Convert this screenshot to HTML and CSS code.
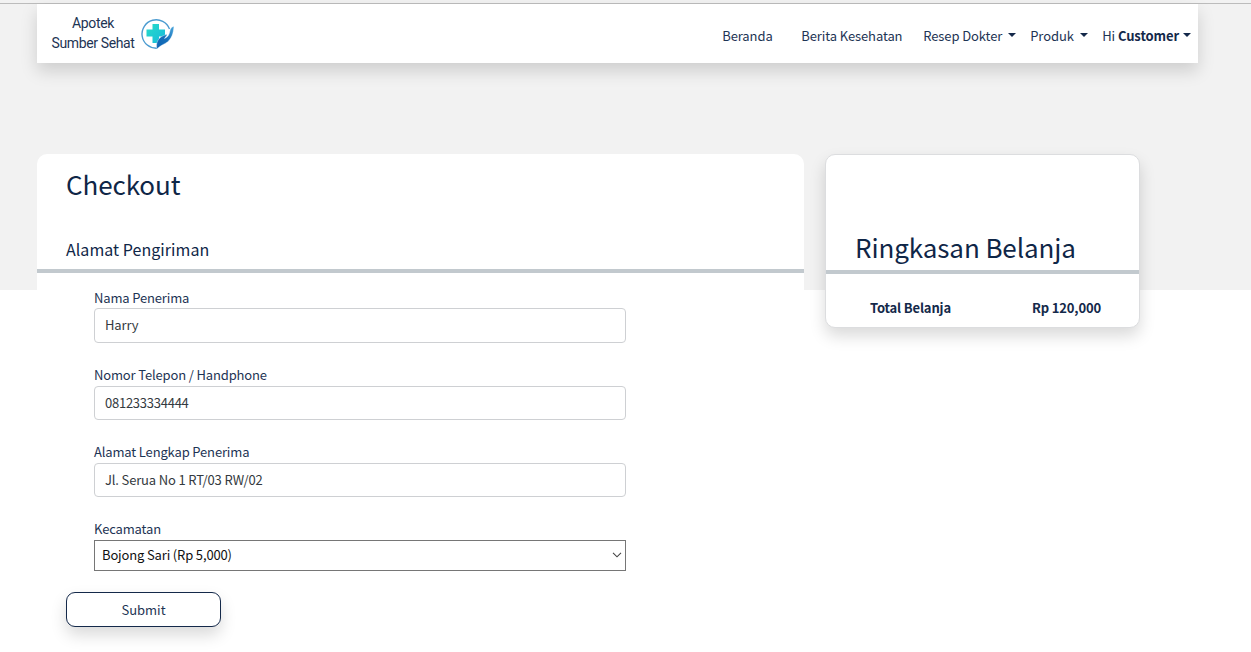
FILE: index.html
```html
<!DOCTYPE html>
<html lang="id">
<head>
<meta charset="utf-8">
<title>Checkout - Apotek Sumber Sehat</title>
<link rel="stylesheet" href="styles.css">
</head>
<body>
<header class="navbar">
  <a class="brand">
    <span class="brand-name">Apotek<br>Sumber Sehat</span>
    <svg class="brand-logo" width="36" height="34" viewBox="0 0 36 34">
      <defs>
        <linearGradient id="hand" x1="0" y1="1" x2="1" y2="0"><stop offset="0" stop-color="#0b62b4"/><stop offset=".5" stop-color="#1670ba"/><stop offset="1" stop-color="#4aa6dc"/></linearGradient>
        <linearGradient id="cross" x1="0" y1="0" x2="1" y2="1"><stop offset="0" stop-color="#27dcc8"/><stop offset="1" stop-color="#17b9dc"/></linearGradient>
      </defs>
      <path d="M29.500 12A14.2 14.2 0 1 0 17 31.200" fill="none" stroke="#4b9bd0" stroke-width="1.4"/>
      <path d="M12.500 7h6.500v5.500h6v7h-6v6.500h-6.500v-6.500h-6v-7h6z" fill="url(#cross)"/>
      <path d="M17 32C15.500 26 18 21 23.500 18.600C25.500 17.800 28 16.800 26.800 18.500L24.500 21.500C28 20 29 18 29.800 14.500C30.300 11.500 31.500 10 34 9.300C33.500 14 33 19 29 23.500C26 27 22 27 17 32Z" fill="url(#hand)" stroke="#fff" stroke-width=".4"/>
    </svg>
  </a>
  <nav class="menu">
    <a class="link link-home">Beranda</a>
    <a class="link link-news">Berita Kesehatan</a>
    <a class="link link-recipe">Resep Dokter<i class="caret"></i></a>
    <a class="link link-product">Produk<i class="caret"></i></a>
    <a class="link link-user">Hi&nbsp;<b>Customer</b><i class="caret"></i></a>
  </nav>
</header>
<main class="content">
  <section class="checkout">
    <h1 class="title">Checkout</h1>
    <h2 class="subtitle">Alamat Pengiriman</h2>
    <form class="form">
      <div class="field"><label class="label">Nama Penerima</label><div class="input input-tall">Harry</div></div>
      <div class="field"><label class="label label-spaced">Nomor Telepon / Handphone</label><div class="input input-digits">081233334444</div></div>
      <div class="field"><label class="label label-spaced">Alamat Lengkap Penerima</label><div class="input">Jl. Serua No 1 RT/03 RW/02</div></div>
      <div class="field"><label class="label">Kecamatan</label><div class="select"><span>Bojong Sari (Rp 5,000)</span>
        <svg width="10" height="6" viewBox="0 0 10 6"><path d="M1 .8L5 4.800L9 .8" fill="none" stroke="#444" stroke-width="1.100"/></svg></div></div>
      <button class="submit" type="button">Submit</button>
    </form>
  </section>
  <aside class="summary">
    <h2 class="summary-title">Ringkasan Belanja</h2>
    <div class="total"><b>Total Belanja</b><b class="amount">Rp 120,000</b></div>
  </aside>
</main>
</body>
</html>
```
FILE: styles.css
```css
* { box-sizing: border-box; }
body {
  margin: 0;
  height: 652px;
  overflow: hidden;
  background: linear-gradient(#f2f2f2, #f2f2f2) 0 0 / 100% 290px no-repeat #fff;
  color: #1d3454;
  font: 13px/20px "Noto Sans CJK SC", "Open Sans", sans-serif;
  letter-spacing: -.15px;
}
body::before { content: ""; display: block; height: 3px; border-bottom: 1px solid #bcbcbc; }
.navbar {
  display: flex;
  justify-content: space-between;
  width: 1161px;
  height: 59px;
  margin-left: 37px;
  padding-left: 14px;
  background: #fff;
  box-shadow: 0 8px 16px rgba(0, 0, 0, .15);
}
.brand { display: flex; gap: 4px; padding-top: 9px; }
.brand-name { width: 84px; text-align: center; white-space: nowrap; font: 14px/20px Roboto, sans-serif; letter-spacing: -.38px; }
.brand-logo { margin: 4px 0 0 1px; }
.menu { display: flex; padding: 22px 7px 0 0; letter-spacing: -.1px; }
.link { display: flex; white-space: nowrap; }
.link b { color: #14294a; }
.link-home { width: 79px; }
.link-news { width: 122px; }
.link-recipe { width: 107px; }
.link-product { width: 72px; }
.caret { margin: 7px 0 0 6px; height: 0; border: 4px solid transparent; border-top-color: #14294a; border-bottom: 0; }
.link-user .caret { margin-left: 4px; }
.content { display: flex; align-items: flex-start; gap: 21px; padding: 91px 0 0 37px; }
.checkout { width: 767px; background: #fff; border-radius: 10px 10px 0 0; }
.title, .subtitle, .summary-title { margin: 0; font-weight: 400; color: #0f2647; white-space: nowrap; letter-spacing: -.1px; }
.title { height: 81px; padding: 10px 0 0 29px; font-size: 26px; line-height: 40px; }
.subtitle { height: 38px; padding: 1px 0 0 29px; font-size: 16px; line-height: 26px; letter-spacing: .05px; border-bottom: 4px solid #c2c9ce; }
.form { padding: 15px 0 0 57px; }
.field { width: 532px; height: 77px; }
.label { display: block; height: 20px; white-space: nowrap; }
.label-spaced { height: 21px; }
.input {
  height: 34px;
  padding: 6px 10px;
  border: 1px solid #ced0d3;
  border-radius: 4px;
  background: #fff;
  color: #343a40;
}
.input-tall { height: 35px; }
.input-digits { letter-spacing: -.25px; }
.select {
  display: flex;
  align-items: center;
  justify-content: space-between;
  height: 31px;
  margin-top: 1px;
  padding: 0 3px 1px 7px;
  border: 1px solid #767676;
  color: #111;
}
.submit {
  display: block;
  width: 155px;
  height: 35px;
  margin: -3px 0 0 -28px;
  border: 1px solid #14294a;
  border-radius: 9px;
  background: #fff;
  color: #1d3454;
  font: inherit;
  box-shadow: 0 8px 16px rgba(0, 0, 0, .15);
}
.field:last-of-type { height: 76px; }
.summary {
  width: 315px;
  height: 174px;
  border: 1px solid #dcdddf;
  border-radius: 10px;
  background: #fff;
  box-shadow: 0 8px 16px rgba(0, 0, 0, .15);
}
.summary-title { height: 119px; padding: 72px 0 0 29px; font-size: 26px; line-height: 40px; border-bottom: 4px solid #c2c9ce; }
.total { display: flex; justify-content: space-between; padding: 24px 38px 0 44px; color: #14294a; }
```
